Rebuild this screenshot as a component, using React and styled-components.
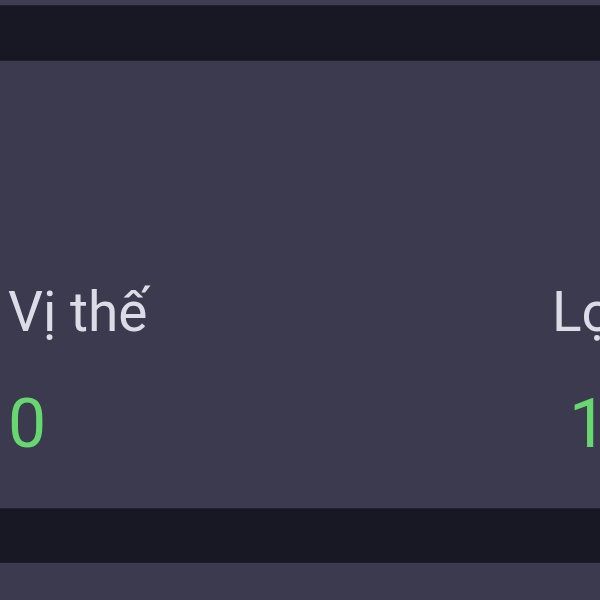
import React from 'react';
import styled, { createGlobalStyle } from 'styled-components';

const GlobalStyle = createGlobalStyle`
    html, body {
        margin: 0;
        padding: 0;
        background: #3b3a4f;
        overflow: hidden;
    }
`;

const Page = styled.div`
    width: 600px;
    height: 600px;
    display: flex;
    flex-direction: column;
    background: #3b3a4f;
    font-family: Roboto, 'Noto Sans', sans-serif;
    overflow: hidden;
`;

const TopStrip = styled.div`
    height: 5px;
    background: #3f3e53;
`;

const Divider = styled.div`
    height: ${(p) => p.$h}px;
    background: #181824;
    box-shadow: inset 0 1px 0 #20202c, inset 0 -1px 0 #20202c;
`;

const Panel = styled.div`
    height: 447px;
    box-sizing: border-box;
    padding: 219px 0 0 8px;
    display: grid;
    grid-template-columns: 544px 200px;
    background: #3b3a4f;
    overflow: hidden;
`;

const Stat = styled.div`
    display: flex;
    flex-direction: column;
    gap: 40px;
    white-space: nowrap;
`;

const Label = styled.div`
    font-size: 55px;
    line-height: 64px;
    color: #dcdce6;
`;

const Value = styled.div`
    font-size: 68px;
    line-height: 80px;
    color: #67d870;
    padding-left: ${(p) => p.$indent || 0}px;
`;

const Bottom = styled.div`
    flex: 1;
    background: #3b3a4f;
`;

const stats = [
    { label: 'Vị thế', value: '0', indent: 0 },
    { label: 'Lợi nhuận', value: '1', indent: 17 },
];

const App = () => (
    <Page>
        <GlobalStyle />
        <TopStrip />
        <Divider $h={56} />
        <Panel>
            {stats.map((s) => (
                <Stat key={s.label}>
                    <Label>{s.label}</Label>
                    <Value $indent={s.indent}>{s.value}</Value>
                </Stat>
            ))}
        </Panel>
        <Divider $h={55} />
        <Bottom />
    </Page>
);

export default App;
